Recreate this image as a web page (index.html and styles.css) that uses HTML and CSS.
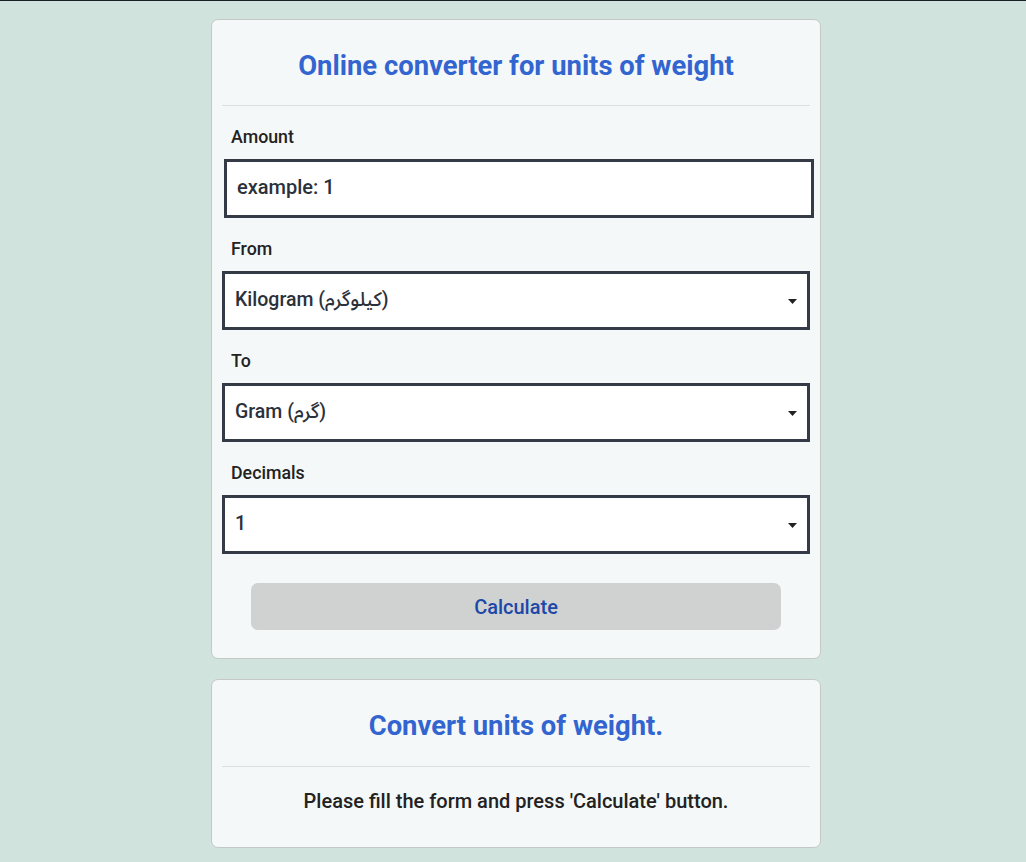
FILE: index.html
```html
<!DOCTYPE html>
<html lang="en">
<head>
<meta charset="utf-8">
<title>Online converter for units of weight</title>
<link rel="stylesheet" href="styles.css">
</head>
<body>
<main class="page">
  <section class="card">
    <h1 class="card-title">Online converter for units of weight</h1>
    <form class="form">
      <div class="group">
        <label class="label" for="amount">Amount</label>
        <input class="field field-input" id="amount" type="text" placeholder="example: 1">
      </div>
      <div class="group">
        <label class="label" for="from">From</label>
        <div class="select-wrap">
          <select class="field field-select" id="from">
            <option>Kilogram (کیلوگرم)</option>
          </select>
          <svg class="caret" width="9" height="5" viewBox="0 0 9 5"><path d="M0 0h9L4.5 5z" fill="#222"/></svg>
        </div>
      </div>
      <div class="group">
        <label class="label" for="to">To</label>
        <div class="select-wrap">
          <select class="field field-select" id="to">
            <option>Gram (گرم)</option>
          </select>
          <svg class="caret" width="9" height="5" viewBox="0 0 9 5"><path d="M0 0h9L4.5 5z" fill="#222"/></svg>
        </div>
      </div>
      <div class="group">
        <label class="label" for="decimals">Decimals</label>
        <div class="select-wrap">
          <select class="field field-select" id="decimals">
            <option>1</option>
          </select>
          <svg class="caret" width="9" height="5" viewBox="0 0 9 5"><path d="M0 0h9L4.5 5z" fill="#222"/></svg>
        </div>
      </div>
      <div class="actions">
        <button class="btn" type="button">Calculate</button>
      </div>
    </form>
  </section>
  <section class="card">
    <h2 class="card-title card-title-2">Convert units of weight.</h2>
    <p class="result">Please fill the form and press 'Calculate' button.</p>
  </section>
</main>
</body>
</html>
```
FILE: styles.css
```css
* { box-sizing: border-box; }
html, body { margin: 0; padding: 0; }
body {
  background: #d1e3dd;
  border-top: 1px solid #1a2024;
  font-family: Roboto, "Noto Sans Arabic", "DejaVu Sans", sans-serif;
  color: #222;
  min-height: 862px;
}
.page {
  width: 610px;
  margin: 0 auto;
  padding-top: 18px;
  position: relative;
  left: 3px;
  display: flex;
  flex-direction: column;
  gap: 20px;
}
.card {
  background: #f5f8f8;
  border: 1px solid #c4c8c7;
  border-radius: 7px;
  padding: 0 10px;
}
.card-title {
  margin: 0;
  padding: 31px 0 24px;
  font-size: 27.4px;
  line-height: 30px;
  font-weight: 700;
  color: #3365d0;
  text-align: center;
  border-bottom: 1px solid #dcdfdf;
}
.card-title-2 {
  padding-bottom: 25px;
}
.form {
  display: flex;
  flex-direction: column;
  gap: 21px;
  padding-top: 21px;
  padding-bottom: 28px;
}
.group {
  display: flex;
  flex-direction: column;
  gap: 12px;
}
.label {
  font-size: 17.8px;
  line-height: 20px;
  font-weight: 500;
  color: #222;
  padding-left: 9px;
}
.field {
  width: 100%;
  height: 59px;
  border: 3px solid #343b47;
  border-radius: 0;
  background: #fff;
  font-family: Roboto, "Noto Sans Arabic", "DejaVu Sans", sans-serif;
  color: #2b313b;
  outline: none;
}
.field-input {
  margin-left: 2px;
  width: calc(100% + 2px);
  padding: 0 10px 3px;
  font-size: 20px;
  font-weight: 500;
}
.field-input::placeholder { color: #2b313b; opacity: 1; }
.select-wrap { position: relative; }
.field-select {
  appearance: none;
  -webkit-appearance: none;
  padding: 0 30px 3px 10px;
  font-size: 19.5px;
  font-weight: 500;
}
.caret {
  position: absolute;
  right: 13px;
  top: 28px;
  pointer-events: none;
}
.actions {
  padding: 8px 29px 0;
}
.btn {
  width: 100%;
  height: 47px;
  border: 0;
  border-radius: 7px;
  background: #d0d2d1;
  color: #1d48a8;
  font-family: Roboto, sans-serif;
  font-size: 20px;
  font-weight: 500;
  cursor: pointer;
}
.result {
  margin: 0;
  padding: 23px 0 35px;
  text-align: center;
  font-size: 20px;
  line-height: 22px;
  font-weight: 500;
  color: #222;
}
```
